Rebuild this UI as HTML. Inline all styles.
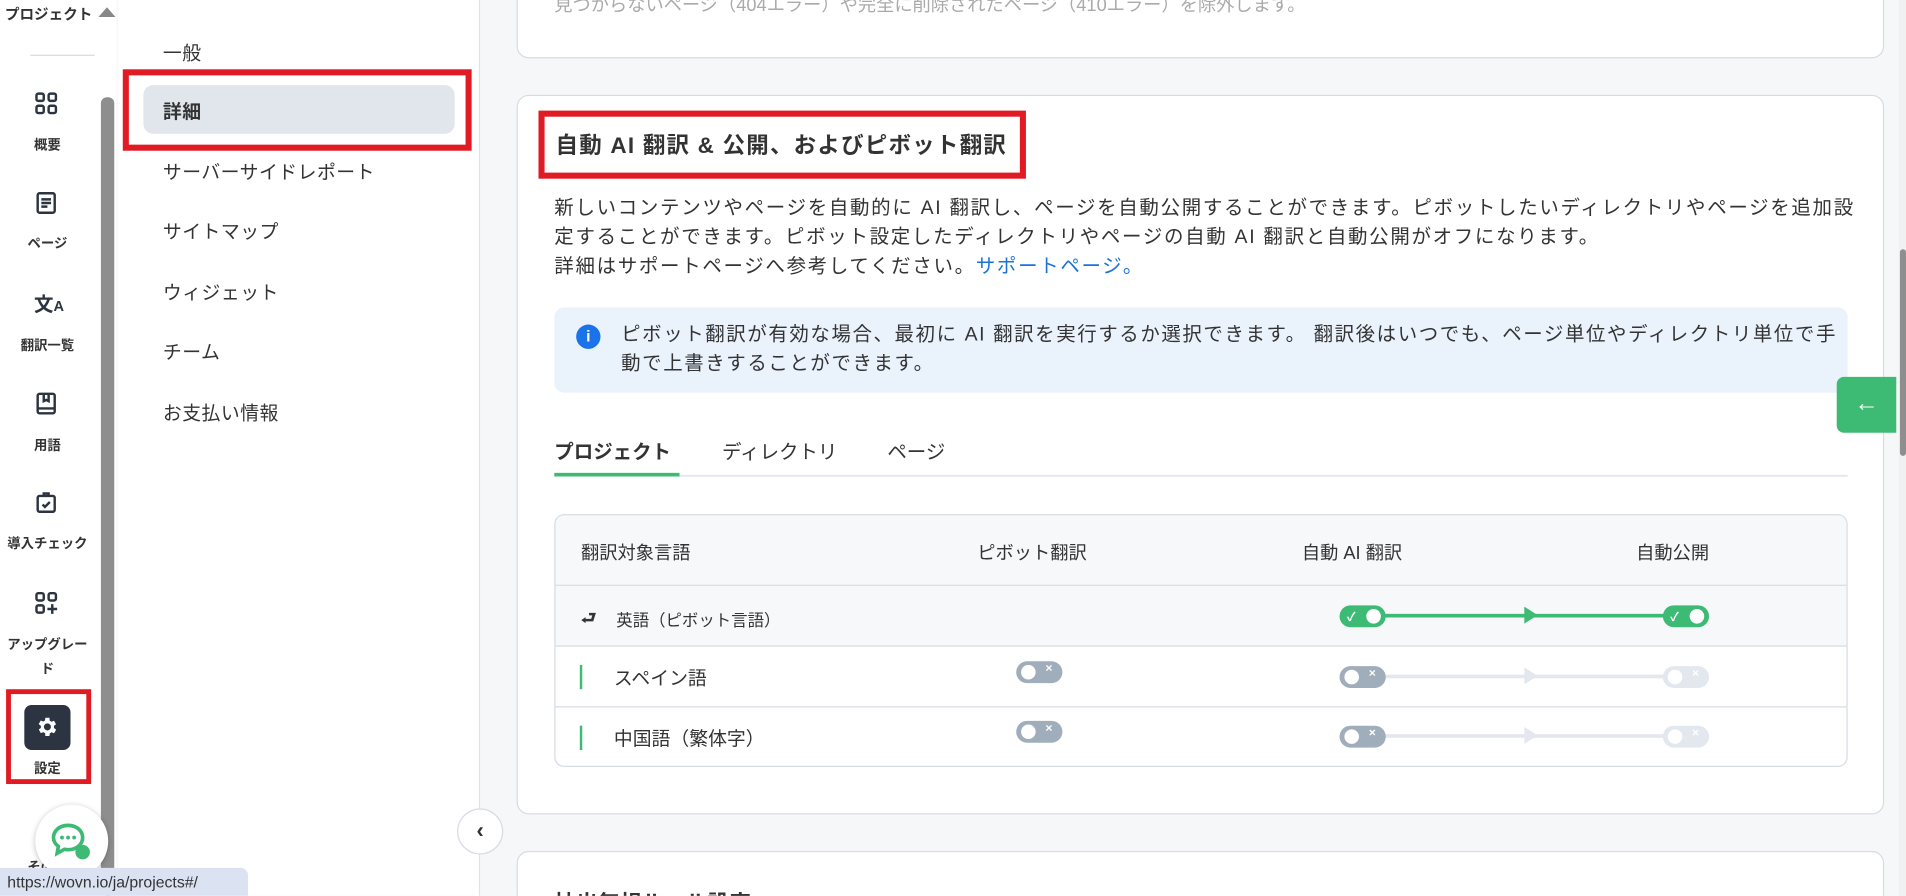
<!DOCTYPE html>
<html><head><meta charset="utf-8"><style>
*{box-sizing:border-box;margin:0;padding:0}
html,body{width:1906px;height:896px;overflow:hidden;background:#f6f7f9}
body{font-family:"Liberation Sans","Noto Sans CJK JP",sans-serif;color:#333}
#w{position:absolute;left:0;top:0;width:1568px;height:737px;transform:scale(1.21556);transform-origin:0 0;overflow:hidden;background:#f6f7f9}
.a{position:absolute}
.nav{left:0;top:0;width:96px;height:737px;background:#fff}
.ni{position:absolute;left:0;width:78px;text-align:center;font-size:11px;font-weight:bold;color:#333}
.sub{left:97px;top:0;width:298px;height:737px;background:#fff;border-right:1px solid #dfe3e8}
.si{position:absolute;left:37px;font-size:15.5px;color:#333;letter-spacing:.4px}
.card{background:#fff;border:1px solid #d6dce4;border-radius:10px}
.tog{position:absolute;width:38px;height:18px;border-radius:9px}
.tog i{position:absolute;top:3px;width:12px;height:12px;border-radius:6px;background:#fff}
.tog b{position:absolute;top:1px;font-size:10px;color:#fff;font-weight:bold}
</style></head><body><div id="w">
<div class="a nav">
 <div class="a" style="left:4px;top:3px;font-size:12px;font-weight:bold">プロジェクト</div>
 <div class="a" style="left:81px;top:6px;width:0;height:0;border-left:7px solid transparent;border-right:7px solid transparent;border-bottom:8px solid #888"></div>
 <div class="a" style="left:25px;top:45px;width:53px;height:1px;background:#d6dce4"></div>
 <div class="a" style="left:83px;top:80px;width:11px;height:657px;background:#8e8e8e;border-radius:5px"></div>
 <svg class="a" style="left:28px;top:75px" width="20" height="20" viewBox="0 0 20 20" fill="none" stroke="#2b3440" stroke-width="2"><rect x="2" y="2" width="6" height="6" rx="1.5"/><rect x="12" y="2" width="6" height="6" rx="1.5"/><rect x="2" y="12" width="6" height="6" rx="1.5"/><rect x="12" y="12" width="6" height="6" rx="1.5"/></svg>
 <div class="ni" style="top:111px">概要</div>
 <svg class="a" style="left:28px;top:157px" width="20" height="20" viewBox="0 0 20 20" fill="none" stroke="#2b3440" stroke-width="2"><rect x="3" y="2" width="14" height="16" rx="1.5"/><path d="M6 7h8M6 10h8M6 13h5"/></svg>
 <div class="ni" style="top:192px">ページ</div>
 <div class="a" style="left:28px;top:237px;font-size:16px;font-weight:bold;color:#2b3440">文<span style="font-size:12px">A</span></div>
 <div class="ni" style="top:276px">翻訳一覧</div>
 <svg class="a" style="left:28px;top:322px" width="20" height="20" viewBox="0 0 20 20" fill="none" stroke="#2b3440" stroke-width="2"><rect x="3" y="2" width="14" height="16" rx="1.5"/><path d="M3 14h14M8 2v6l2-1 2 1V2"/></svg>
 <div class="ni" style="top:358px">用語</div>
 <svg class="a" style="left:28px;top:404px" width="20" height="20" viewBox="0 0 20 20" fill="none" stroke="#2b3440" stroke-width="2"><rect x="3" y="4" width="14" height="13" rx="1.5"/><path d="M8 4V2h4v2M7 11l2 2 4-4"/></svg>
 <div class="ni" style="top:439px">導入チェック</div>
 <svg class="a" style="left:28px;top:486px" width="20" height="20" viewBox="0 0 20 20" fill="none" stroke="#2b3440" stroke-width="2"><rect x="2" y="2" width="6" height="6" rx="1.5"/><rect x="12" y="2" width="6" height="6" rx="1.5"/><rect x="2" y="12" width="6" height="6" rx="1.5"/><path d="M15 11v8M11 15h8"/></svg>
 <div class="ni" style="top:521px;line-height:20px">アップグレー<br>ド</div>
 <div class="a" style="left:5px;top:567px;width:70px;height:78px;border:4px solid #e01b24"></div>
 <div class="a" style="left:20px;top:580px;width:38px;height:37px;background:#2b3440;border-radius:6px"></div>
 <svg class="a" style="left:29px;top:588px" width="20" height="20" viewBox="0 0 24 24"><path fill="#fff" d="M19.4 13a7.5 7.5 0 000-2l2.1-1.6-2-3.5-2.5 1a7 7 0 00-1.7-1L15 3h-4l-.4 2.7a7 7 0 00-1.7 1l-2.5-1-2 3.5L6.6 11a7.5 7.5 0 000 2l-2.1 1.6 2 3.5 2.5-1a7 7 0 001.7 1L11 21h4l.4-2.7a7 7 0 001.7-1l2.5 1 2-3.5zM13 15.5a3.5 3.5 0 110-7 3.5 3.5 0 010 7z" transform="translate(-1 0)"/></svg>
 <div class="ni" style="top:624px">設定</div>
 <div class="ni" style="top:705px">その他</div>
</div>
<div class="a sub">
 <div class="si" style="top:32px">一般</div>
 <div class="a" style="left:21px;top:70px;width:256px;height:40px;background:#e1e6ec;border-radius:8px"></div>
 <div class="a" style="left:4px;top:57px;width:287px;height:67px;border:5px solid #e01b24"></div>
 <div class="si" style="top:80px;font-weight:bold">詳細</div>
 <div class="si" style="top:130px">サーバーサイドレポート</div>
 <div class="si" style="top:179px">サイトマップ</div>
 <div class="si" style="top:229px">ウィジェット</div>
 <div class="si" style="top:278px">チーム</div>
 <div class="si" style="top:328px">お支払い情報</div>
</div>
<div class="a" style="left:376px;top:665px;width:38px;height:38px;border-radius:19px;background:#fff;border:1px solid #d6dce4;text-align:center;font-size:18px;line-height:34px;font-weight:bold">‹</div>
<div class="a card" style="left:425px;top:-20px;width:1125px;height:68px"><div class="a" style="left:30px;top:12px;font-size:15px;color:#aaa">見つからないページ（404エラー）や完全に削除されたページ（410エラー）を除外します。</div></div>
<div class="a card" style="left:425px;top:78px;width:1125px;height:592px">
 <div class="a" style="left:17px;top:12px;width:401px;height:56px;border:5px solid #e01b24"></div>
 <div class="a" style="left:31px;top:27px;font-size:18.5px;font-weight:bold;letter-spacing:1px">自動 AI 翻訳 &amp; 公開、およびピボット翻訳</div>
 <div class="a" style="left:30px;top:81px;width:1070px;font-size:16px;line-height:24px;color:#333;letter-spacing:1.4px">新しいコンテンツやページを自動的に AI 翻訳し、ページを自動公開することができます。ピボットしたいディレクトリやページを追加設定することができます。ピボット設定したディレクトリやページの自動 AI 翻訳と自動公開がオフになります。<br>詳細はサポートページへ参考してください。<span style="color:#1a73d9">サポートページ。</span></div>
 <div class="a" style="left:30px;top:174px;width:1064px;height:70px;background:#eaf2fc;border-radius:8px">
  <div class="a" style="left:18px;top:14px;width:20px;height:20px;border-radius:10px;background:#1a73e8;color:#fff;font-size:13px;font-weight:bold;text-align:center;line-height:20px">i</div>
  <div class="a" style="left:55px;top:11px;width:1010px;font-size:16px;line-height:24px;letter-spacing:1.3px">ピボット翻訳が有効な場合、最初に AI 翻訳を実行するか選択できます。 翻訳後はいつでも、ページ単位やディレクトリ単位で手動で上書きすることができます。</div>
 </div>
 <div class="a" style="left:30px;top:279px;font-size:16px;font-weight:bold">プロジェクト</div>
 <div class="a" style="left:168px;top:279px;font-size:16px">ディレクトリ</div>
 <div class="a" style="left:304px;top:279px;font-size:16px">ページ</div>
 <div class="a" style="left:30px;top:312px;width:1064px;height:1px;background:#d6dce4"></div>
 <div class="a" style="left:30px;top:310px;width:103px;height:3px;background:#3dba74"></div>
 <div class="a" style="left:30px;top:344px;width:1064px;height:208px;border:1px solid #d6dce4;border-radius:8px;overflow:hidden;background:#fff">
  <div class="a" style="left:0;top:0;width:1064px;height:58px;background:#f7f8fa;border-bottom:1px solid #d6dce4"></div>
  <div class="a" style="left:0;top:58px;width:1064px;height:50px;background:#f7f8fa;border-bottom:1px solid #d6dce4"></div>
  <div class="a" style="left:0;top:108px;width:1064px;height:50px;border-bottom:1px solid #d6dce4"></div>
  <div class="a" style="left:21px;top:20px;font-size:15px">翻訳対象言語</div>
  <div class="a" style="left:347px;top:20px;font-size:15px">ピボット翻訳</div>
  <div class="a" style="left:614px;top:20px;font-size:15px">自動 AI 翻訳</div>
  <div class="a" style="left:889px;top:20px;font-size:15px">自動公開</div>
  <div class="a" style="left:21px;top:74px;font-size:14px;font-weight:bold">⮐</div>
  <div class="a" style="left:50px;top:75px;font-size:13.5px">英語（ピボット言語）</div>
  <div class="a" style="left:20px;top:123px;width:2px;height:20px;background:#3dba74"></div>
  <div class="a" style="left:48px;top:122px;font-size:15.5px">スペイン語</div>
  <div class="a" style="left:20px;top:173px;width:2px;height:20px;background:#3dba74"></div>
  <div class="a" style="left:48px;top:172px;font-size:15.5px">中国語（繁体字）</div>
  <div class="a" style="left:680px;top:81px;width:236px;height:3px;background:#3dba74"></div>
  <div class="a" style="left:797px;top:75px;border-left:11px solid #3dba74;border-top:7px solid transparent;border-bottom:7px solid transparent"></div>
  <div class="tog" style="left:645px;top:74px;background:#3dba74"><b style="left:6px">✓</b><i style="left:22px"></i></div>
  <div class="tog" style="left:911px;top:74px;background:#3dba74"><b style="left:6px">✓</b><i style="left:22px"></i></div>
  <div class="tog" style="left:379px;top:120px;background:#a0adba"><i style="left:4px"></i><b style="left:24px">×</b></div>
  <div class="a" style="left:680px;top:131px;width:236px;height:3px;background:#e3e8ee"></div>
  <div class="a" style="left:797px;top:125px;border-left:11px solid #e3e8ee;border-top:7px solid transparent;border-bottom:7px solid transparent"></div>
  <div class="tog" style="left:645px;top:124px;background:#a0adba"><i style="left:4px"></i><b style="left:24px">×</b></div>
  <div class="tog" style="left:911px;top:124px;background:#e3e8ee"><i style="left:4px"></i><b style="left:24px">×</b></div>
  <div class="tog" style="left:379px;top:169px;background:#a0adba"><i style="left:4px"></i><b style="left:24px">×</b></div>
  <div class="a" style="left:680px;top:180px;width:236px;height:3px;background:#e3e8ee"></div>
  <div class="a" style="left:797px;top:174px;border-left:11px solid #e3e8ee;border-top:7px solid transparent;border-bottom:7px solid transparent"></div>
  <div class="tog" style="left:645px;top:173px;background:#a0adba"><i style="left:4px"></i><b style="left:24px">×</b></div>
  <div class="tog" style="left:911px;top:173px;background:#e3e8ee"><i style="left:4px"></i><b style="left:24px">×</b></div>
 </div>
</div>
<div class="a card" style="left:425px;top:700px;width:1125px;height:80px"><div class="a" style="left:30px;top:28px;font-size:18px;font-weight:bold">抽出無視ルール設定</div></div>
<div class="a" style="left:1511px;top:310px;width:49px;height:46px;background:#3dba74;border-radius:6px 0 0 6px;color:#fff;font-size:20px;text-align:center;line-height:44px">←</div>
<div class="a" style="left:1562px;top:0;width:6px;height:737px;background:#f1f1f1"></div>
<div class="a" style="left:1563px;top:205px;width:5px;height:170px;background:#8e8e8e;border-radius:3px"></div>
<div class="a" style="left:29px;top:662px;width:60px;height:60px;border-radius:30px;background:#fff;box-shadow:0 1px 5px rgba(0,0,0,.25)"></div>
<svg class="a" style="left:41px;top:676px" width="38" height="34" viewBox="0 0 38 34"><path d="M15 3C8 3 3 7.5 3 13c0 3 1.5 5.5 4 7.3L6 26l6-3.3c1 .2 2 .3 3 .3 7 0 12-4.5 12-10S22 3 15 3z" fill="#fff" stroke="#3dba74" stroke-width="3"/><circle cx="10" cy="13" r="1.6" fill="#3dba74"/><circle cx="15" cy="13" r="1.6" fill="#3dba74"/><circle cx="20" cy="13" r="1.6" fill="#3dba74"/><circle cx="27" cy="25" r="6" fill="#3dba74"/></svg>
<div class="a" style="left:0;top:714px;width:204px;height:23px;background:#dbe3f3;border-radius:0 6px 0 0;font-size:13px;padding:4px 0 0 6px;color:#333">https://wovn.io/ja/projects#/</div>
</div></body></html>
